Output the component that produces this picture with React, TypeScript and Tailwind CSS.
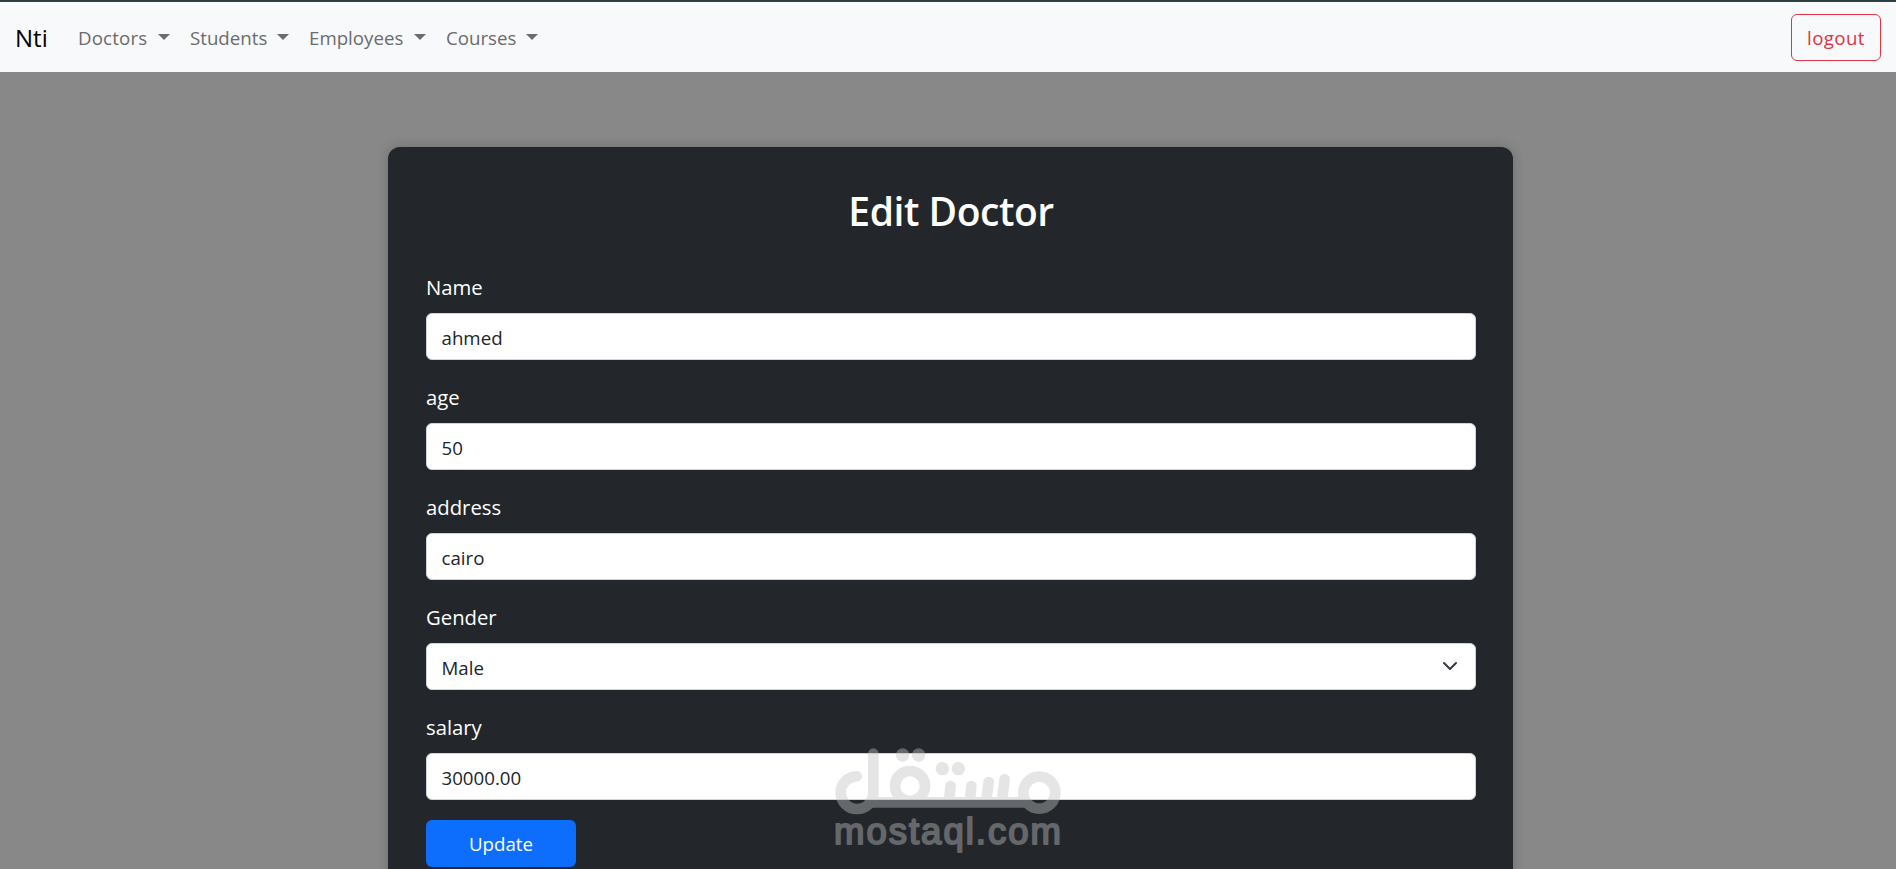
import { useState } from 'react';
import { clsx } from 'clsx';

interface Field {
  name: string;
  label: string;
  value: string;
  options?: string[];
}

const navItems = [
  { label: 'Doctors', className: 'w-[69px] tracking-[0.15px]' },
  { label: 'Students', className: 'w-[76px]' },
  { label: 'Employees', className: 'w-[94px]' },
  { label: 'Courses', className: 'w-[69px]' },
];

const fields: Field[] = [
  { name: 'name', label: 'Name', value: 'ahmed' },
  { name: 'age', label: 'age', value: '50' },
  { name: 'address', label: 'address', value: 'cairo' },
  { name: 'gender', label: 'Gender', value: 'Male', options: ['Male', 'Female'] },
  { name: 'salary', label: 'salary', value: '30000.00' },
];

const controlClass =
  'block w-full h-[47px] appearance-none rounded-[6px] border border-[#ced4da] bg-white px-[14.5px] text-[18.7px] text-[#212529]';

function Navbar() {
  return (
    <nav className="h-[72px] border-t-2 border-[#2f4043] bg-[#f8f9fa] px-[15px] flex items-center">
      <a href="#" className="w-[63px] pt-0.5 text-[24px] text-black">Nti</a>
      <ul className="flex gap-5 text-[18.7px] text-[#6b6c6d]">
        {navItems.map((item) => (
          <li key={item.label} className="flex items-center gap-[11px]">
            <span className={clsx('pt-0.5 whitespace-nowrap', item.className)}>{item.label}</span>
            <span className="border-t-[6px] border-x-[6px] border-x-transparent border-t-[#6b6c6d]" />
          </li>
        ))}
      </ul>
      <button className="ml-auto w-[90px] h-[47px] pt-0.5 rounded-[6px] border border-[#dc3545] text-[#dc3545] text-[18.7px] tracking-[0.4px]">
        logout
      </button>
    </nav>
  );
}

function Watermark() {
  return (
    <svg viewBox="0 0 300 149" className="absolute left-[800px] top-[720px] w-[300px] h-[149px] pointer-events-none">
      <g opacity="0.416" fill="#c3c3c3" stroke="#c3c3c3" strokeWidth="0">
        <g transform="scale(0.33333)">
          <g fill="none" strokeWidth="32" strokeLinecap="round">
            <path d="M170 169 A49 49 0 1 0 220 218 V101" />
            <circle cx="330" cy="198" r="45" />
            <path d="M452 198 L447 240 M514 198 L510 240 M566 186 L559 240 M614 178 L606 240" />
            <circle cx="718" cy="218" r="48" />
          </g>
          <path d="M215 231 H672 V263 H215 Z" />
          <circle cx="308" cy="105" r="20" />
          <circle cx="356" cy="105" r="20" />
          <circle cx="427" cy="146" r="20" />
          <circle cx="475" cy="146" r="20" />
        </g>
        <text
          x="34"
          y="123.5"
          fontSize="36.5"
          letterSpacing="2"
          strokeWidth="1.9"
          strokeLinejoin="round"
          fontFamily="Liberation Sans, sans-serif"
        >
          mostaql.com
        </text>
      </g>
    </svg>
  );
}

export default function App() {
  const [values, setValues] = useState<Record<string, string>>(
    Object.fromEntries(fields.map((f) => [f.name, f.value]))
  );

  const update = (name: string, value: string) => setValues({ ...values, [name]: value });

  return (
    <div className="relative h-[869px] overflow-hidden bg-[#888888] font-['Open_Sans',sans-serif]">
      <Navbar />

      <div className="ml-[388px] mt-[75px] w-[1125px] h-[800px] rounded-xl bg-[#23272b] pl-[38px] pr-[37px] pt-[38px] shadow-[0_0_12px_rgba(0,0,0,0.2)]">
        <h2 className="h-[90px] text-center text-[39px] leading-[52px] font-semibold tracking-[-0.45px] text-white">Edit Doctor</h2>

        <form onSubmit={(e) => e.preventDefault()}>
          <div className="flex flex-col gap-[25px]">
            {fields.map((field) => (
              <div key={field.name}>
                <label htmlFor={field.name} className="block h-[38px] text-[20.3px] leading-[24px] font-medium text-white">
                  {field.label}
                </label>
                {field.options ? (
                  <div className="relative">
                    <select
                      id={field.name}
                      value={values[field.name]}
                      onChange={(e) => update(field.name, e.target.value)}
                      className={clsx(controlClass, 'pt-[3px]')}
                    >
                      {field.options.map((o) => <option key={o}>{o}</option>)}
                    </select>
                    <svg viewBox="0 0 16 16" className="absolute right-[18px] top-[15px] w-4 h-4 pointer-events-none" fill="none" stroke="#343a40" strokeWidth="2" strokeLinecap="round" strokeLinejoin="round">
                      <path d="M2 5l6 6 6-6" />
                    </svg>
                  </div>
                ) : (
                  <input
                    id={field.name}
                    value={values[field.name]}
                    onChange={(e) => update(field.name, e.target.value)}
                    className={clsx(controlClass, 'pt-0.5')}
                  />
                )}
              </div>
            ))}
          </div>
          <button type="submit" className="mt-5 block w-[150px] h-[47px] pt-0.5 rounded-[6px] bg-[#0d6efd] text-[18.7px] text-white">
            Update
          </button>
        </form>
      </div>

      <Watermark />
    </div>
  );
}
